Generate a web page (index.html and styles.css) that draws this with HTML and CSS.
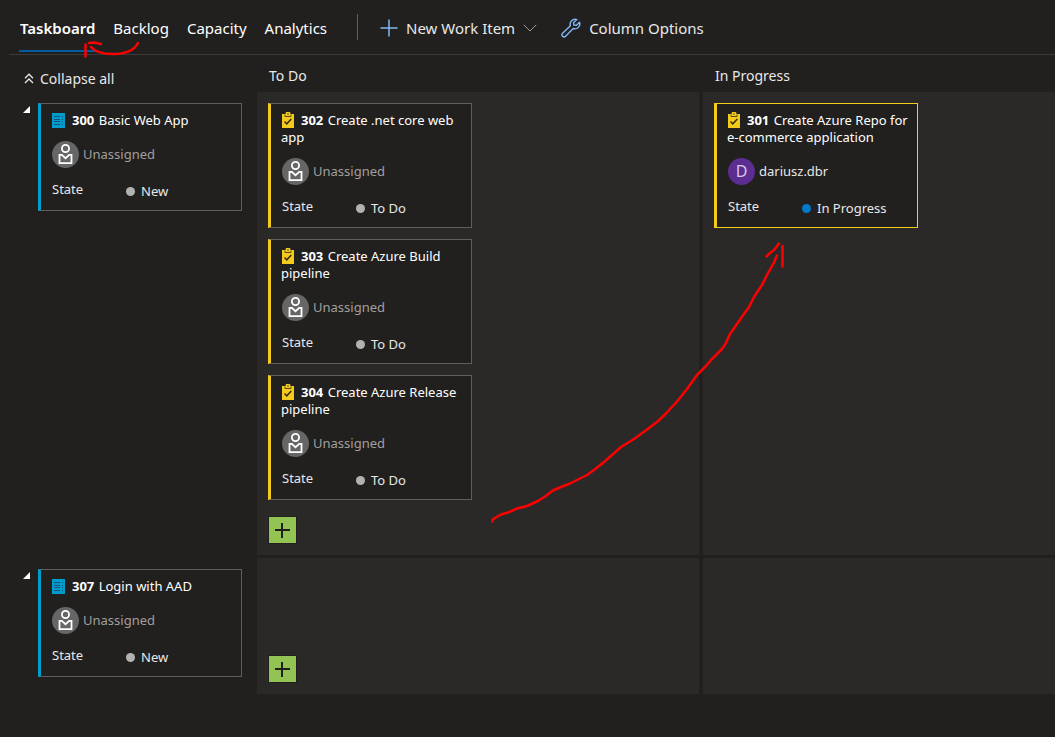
FILE: index.html
```
<!DOCTYPE html>
<html lang="en">
<head>
<meta charset="utf-8">
<title>Taskboard</title>
<link rel="stylesheet" href="styles.css">
</head>
<body>
<svg class="symbols" aria-hidden="true">
  <symbol id="story" viewBox="0 0 13 15">
    <path fill="#009ccc" d="M0 0h13v15H0z"/>
    <path stroke="#1b4f78" d="M2 3.500h6M2 6.500h6M2 8.500h6M2 11.500h6M10 3.500h1M10 6.500h1M10 8.500h1M10 11.500h1"/>
  </symbol>
  <symbol id="task" viewBox="0 0 12 16">
    <path fill="#f2cb1d" d="M0 2h3.500a2.500 2.500 0 0 1 5 0H12v14H0z"/>
    <path fill="none" stroke="#5b4a10" d="M3 2.500v2h6v-2"/>
    <circle cx="6" cy="2" r=".8" fill="#5b4a10"/>
    <path fill="none" stroke="#3a2a10" stroke-width="1.500" d="M2.500 9.500l2.300 2.300L9.300 7"/>
  </symbol>
  <symbol id="person" viewBox="0 0 27 27">
    <circle cx="13.500" cy="13.500" r="13.500" fill="#666"/>
    <g fill="none" stroke="#fff" stroke-width="1.800"><circle cx="13.500" cy="7.500" r="3.600"/><path d="M7.500 22.200v-8.400h2.300l3.700 3.400 3.700-3.400h2.300v8.400z"/></g>
  </symbol>
</svg>

<header class="toolbar">
  <nav class="tabs">
    <a class="tab active" href="#taskboard">Taskboard</a>
    <a class="tab" href="#backlog">Backlog</a>
    <a class="tab" href="#capacity">Capacity</a>
    <a class="tab" href="#analytics">Analytics</a>
  </nav>
  <div class="commands">
    <button class="command" type="button">
      <svg width="18" height="18" fill="none" stroke="#82b8f5" stroke-width="1.500"><path d="M9 .5v17M.5 9h17"/></svg>
      New Work Item
      <svg width="14" height="8" fill="none" stroke="#999"><path d="M.8 .8L7 7 13.200 .8"/></svg>
    </button>
    <button class="command" type="button">
      <svg width="20" height="20" fill="none" stroke="#82b8f5" stroke-width="1.400" stroke-linejoin="round"><path d="M15.800 1.600a4.900 4.900 0 0 0-6.400 6.200L1.600 15.200a2.100 2.100 0 0 0 3 3l7.600-7.700a4.900 4.900 0 0 0 6.300-6.300l-3.300 3.200-2.300-.4-.4-2.200z"/></svg>
      Column Options
    </button>
  </div>
</header>

<main class="board">
  <button class="collapse" type="button">
    <svg width="10" height="11" fill="none" stroke="#e8e8e8" stroke-width="1.300"><path d="M1 5.200l4-4 4 4M1 10l4-4 4 4"/></svg>
    Collapse all
  </button>
  <h2 class="heading">To Do</h2>
  <h2 class="heading">In Progress</h2>

  <section class="parent">
    <button class="toggle" type="button" aria-label="Collapse 300"><svg width="7" height="7"><path fill="#fff" d="M7 0v7H0z"/></svg></button>
    <article class="card story">
      <h3 class="title"><svg class="type" width="13" height="15"><use href="#story"/></svg><b>300</b> Basic Web App</h3>
      <div class="person muted"><svg width="27" height="27"><use href="#person"/></svg>Unassigned</div>
      <div class="state"><span class="label">State</span><span class="value">New</span></div>
    </article>
  </section>
  <section class="cell">
    <article class="card">
      <h3 class="title"><svg class="type" width="12" height="16"><use href="#task"/></svg><b>302</b> Create .net core web app</h3>
      <div class="person muted"><svg width="27" height="27"><use href="#person"/></svg>Unassigned</div>
      <div class="state"><span class="label">State</span><span class="value">To Do</span></div>
    </article>
    <article class="card">
      <h3 class="title"><svg class="type" width="12" height="16"><use href="#task"/></svg><b>303</b> Create Azure Build pipeline</h3>
      <div class="person muted"><svg width="27" height="27"><use href="#person"/></svg>Unassigned</div>
      <div class="state"><span class="label">State</span><span class="value">To Do</span></div>
    </article>
    <article class="card">
      <h3 class="title"><svg class="type" width="12" height="16"><use href="#task"/></svg><b>304</b> Create Azure Release pipeline</h3>
      <div class="person muted"><svg width="27" height="27"><use href="#person"/></svg>Unassigned</div>
      <div class="state"><span class="label">State</span><span class="value">To Do</span></div>
    </article>
    <button class="add" type="button" aria-label="Add task"><svg width="15" height="15" stroke="#201f1e" stroke-width="2"><path d="M7 0v15M0 7h15"/></svg></button>
  </section>
  <section class="cell">
    <article class="card selected">
      <h3 class="title"><svg class="type" width="12" height="16"><use href="#task"/></svg><b>301</b> Create Azure Repo for e-commerce application</h3>
      <div class="person"><span class="initial">D</span>dariusz.dbr</div>
      <div class="state"><span class="label">State</span><span class="value doing">In Progress</span></div>
    </article>
  </section>

  <section class="parent">
    <button class="toggle" type="button" aria-label="Collapse 307"><svg width="7" height="7"><path fill="#fff" d="M7 0v7H0z"/></svg></button>
    <article class="card story">
      <h3 class="title"><svg class="type" width="13" height="15"><use href="#story"/></svg><b>307</b> Login with AAD</h3>
      <div class="person muted"><svg width="27" height="27"><use href="#person"/></svg>Unassigned</div>
      <div class="state"><span class="label">State</span><span class="value">New</span></div>
    </article>
  </section>
  <section class="cell short">
    <button class="add" type="button" aria-label="Add task"><svg width="15" height="15" stroke="#201f1e" stroke-width="2"><path d="M7 0v15M0 7h15"/></svg></button>
  </section>
  <section class="cell short"></section>
</main>

<svg class="ink" width="1055" height="737" aria-hidden="true">
  <path d="M138 43C134 51 124 54 113 54C104 54 96 53 91 47M101 44L94 42.500L89 43M85.500 44.500V56.500"/>
  <path d="M492.500 521.500V519.500L501 514.500L508 512.500L517 508.500L527 506L538 501L545 496.500L553 490.500L561 487L570 483.500L587 475L594 470L604 462L621 447L634 439L645 431L657 422L666 413.500L677 401.500L687 389L697 375L706 366L712 359L722 349L726 343L730 334L739 321L749 307L754 297L762 285L768 273L774 262.500L777 255.500M766.500 256.500L770 253L774 250L779 243.500M782.500 246V266.500"/>
</svg>
</body>
</html>
```
FILE: styles.css
```
* { box-sizing: border-box; }

body {
  margin: 0;
  min-height: 100vh;
  background: #21201f;
  color: #fff;
  font: 13px/17px "Noto Sans", sans-serif;
}

button {
  padding: 0;
  border: 0;
  background: none;
  color: inherit;
  font: inherit;
}

svg { flex: none; }
.symbols { display: none; }

.toolbar {
  display: flex;
  align-items: center;
  margin-left: 9px;
  height: 55px;
  border-bottom: 1px solid #3b3a39;
  font-size: 15px;
  line-height: 20px;
  white-space: nowrap;
}

.tabs {
  display: flex;
  align-self: stretch;
  gap: 16px;
  padding-left: 10px;
}

.tab {
  padding: 18px 1px 12px;
  color: #fff;
  text-decoration: none;
}

.active {
  margin-bottom: 2px;
  border-bottom: 2px solid #005ba1;
  font-weight: 600;
}

.commands {
  display: flex;
  align-items: center;
  gap: 24px;
  margin-left: 29px;
  padding-left: 22px;
  height: 26px;
  border-left: 1px solid #605e5c;
  color: #e8e8e8;
}

.command {
  display: flex;
  align-items: center;
  gap: 8px;
  padding-top: 2px;
}

.board {
  display: grid;
  grid-template-columns: 253px 442fr 352fr;
  grid-template-rows: 34px;
  gap: 3px 4px;
}

.collapse {
  display: flex;
  align-items: center;
  gap: 6px;
  padding: 12px 0 0 24px;
  color: #e8e8e8;
  font-size: 14px;
}

.heading {
  margin: 0;
  padding: 12px 12px 0;
  color: #e8e8e8;
  font-size: 14px;
  font-weight: 400;
}

.parent {
  display: flex;
  align-items: flex-start;
  gap: 8px;
  padding: 11px 0 11px 23px;
}

.toggle {
  display: flex;
  padding-top: 3px;
}

.cell {
  display: flex;
  flex-direction: column;
  gap: 11px;
  padding: 11px;
  background: #2a2928;
}

.short { min-height: 136px; }

.card {
  width: 204px;
  padding: 8px 5px 10px 10px;
  border: 1px solid #605e5c;
  border-left: 3px solid #f2cb1d;
  background: #21201f;
}

.story { border-left-color: #009ccc; }
.selected { border-color: #f2cb1d; }

.title {
  margin: 0;
  font-size: 13px;
  font-weight: 400;
}

.title b { margin-right: 1px; }

.type {
  margin: 0 7px 0 1px;
  vertical-align: -3px;
}

.person {
  display: flex;
  align-items: center;
  gap: 4px;
  margin: 12px 1px 13px;
  color: #e8e8e8;
}

.muted { color: #a19f9d; }

.initial {
  display: grid;
  place-items: center;
  width: 27px;
  height: 27px;
  border-radius: 50%;
  background: #5c2e91;
  color: #d9c8ec;
  font-size: 16px;
}

.state {
  display: grid;
  grid-template-columns: 74px 1fr;
  height: 19px;
  margin-left: 1px;
  color: #e8e8e8;
}

.value {
  display: flex;
  align-items: center;
  align-self: end;
  gap: 6px;
}

.value::before {
  content: "";
  width: 9px;
  height: 9px;
  border-radius: 50%;
  background: #b2b2b2;
}

.doing::before { background: #007acc; }

.add {
  display: grid;
  place-items: center;
  width: 29px;
  height: 28px;
  margin-top: 5px;
  border: 1px solid #21201f;
  background: #92c353;
}

.short .add { margin-top: auto; }

.ink {
  position: absolute;
  top: 0;
  left: 0;
  fill: none;
  stroke: #f00;
  stroke-width: 2.500;
  stroke-linecap: round;
  stroke-linejoin: round;
  pointer-events: none;
}
```
